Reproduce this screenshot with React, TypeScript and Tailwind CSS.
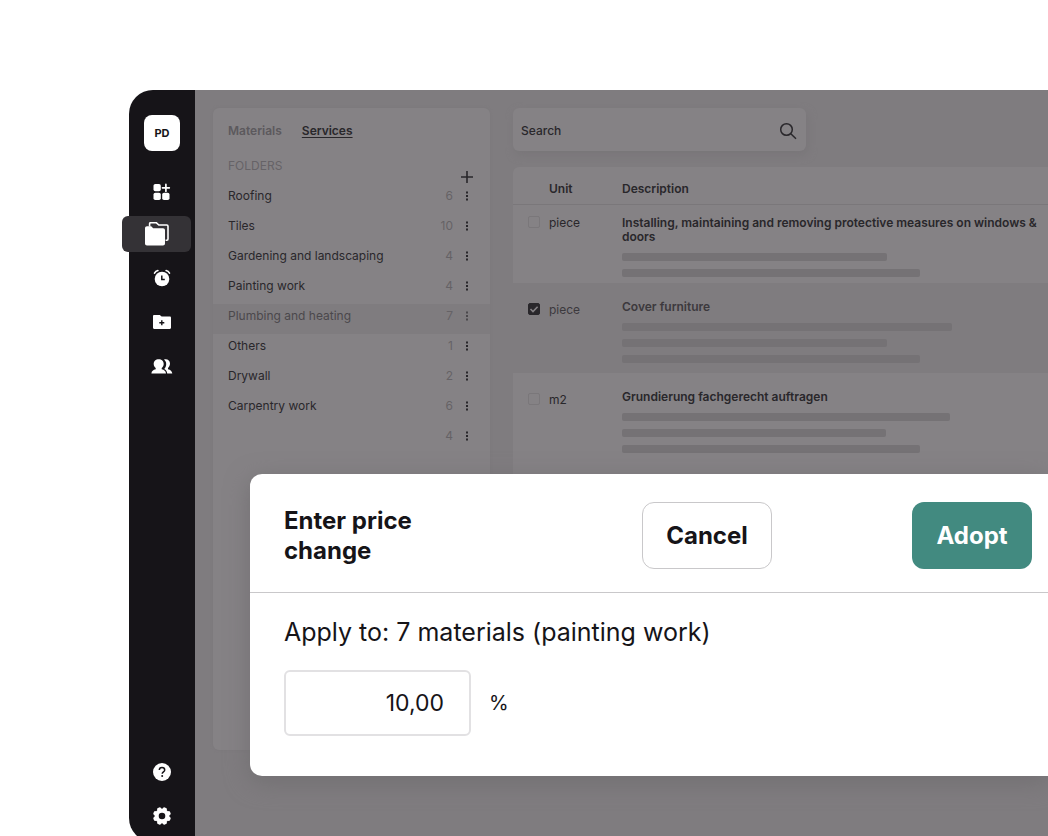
import type { ReactNode } from "react";

const folders = [
  { name: "Roofing", count: 6 },
  { name: "Tiles", count: 10 },
  { name: "Gardening and landscaping", count: 4 },
  { name: "Painting work", count: 4 },
  { name: "Plumbing and heating", count: 7, active: true },
  { name: "Others", count: 1 },
  { name: "Drywall", count: 2 },
  { name: "Carpentry work", count: 6 },
  { name: "", count: 4 },
];

const services = [
  {
    unit: "piece",
    title: "Installing, maintaining and removing protective measures on windows & doors",
    bars: ["w-[265px]", "w-[298px]"],
    row: "h-[79px]",
    unitPad: "pt-[11px]",
    titlePad: "pt-[11px]",
  },
  {
    unit: "piece",
    title: "Cover furniture",
    bars: ["w-[330px]", "w-[265px]", "w-[298px]"],
    row: "h-[90px] bg-[#7f7c7f] text-[#3c393d]",
    unitPad: "pt-5",
    titlePad: "pt-[17px]",
    checked: true,
  },
  {
    unit: "m2",
    title: "Grundierung fachgerecht auftragen",
    bars: ["w-[328px]", "w-[264px]", "w-[298px]"],
    row: "h-[110px]",
    unitPad: "pt-5",
    titlePad: "pt-[17px]",
  },
];

function GridIcon() {
  return (
    <svg width="20" height="20" viewBox="0 0 20 20" fill="currentColor">
      <rect x="1.5" y="4" width="7.3" height="7.3" rx="1.8" />
      <rect x="1.5" y="12.7" width="7.3" height="7.3" rx="1.8" />
      <rect x="10.2" y="12.7" width="7.3" height="7.3" rx="1.8" />
      <path d="M13.9 4.4v6.8M10.5 7.8h6.8" stroke="currentColor" strokeWidth="1.7" strokeLinecap="round" />
    </svg>
  );
}

function FoldersIcon() {
  return (
    <svg width="24" height="24" viewBox="0 0 24 24" fill="none">
      <path
        d="M0 6.3C0 5.100.8 4.300 2 4.300h4.200l2 2h9.800c1.200 0 2 .8 2 2V21.500c0 1.200-.8 2-2 2H2c-1.200 0-2-.8-2-2z"
        fill="currentColor"
      />
      <path
        d="M4.600 4.400V1.800c0-.8.400-1.200 1.200-1.200h5.400l2.600 2.400h8c.8 0 1.200.4 1.200 1.200v12.800c0 .8-.4 1.200-1.200 1.200h-1.200"
        stroke="currentColor"
        strokeWidth="1.600"
        strokeLinejoin="round"
      />
    </svg>
  );
}

function AlarmIcon() {
  return (
    <svg width="18" height="18" viewBox="0 0 18 18" fill="none">
      <circle cx="9" cy="10" r="7.300" fill="currentColor" />
      <path d="M1.500 4.200C2.200 2.900 3.400 1.900 4.900 1.500M16.500 4.200c-.7-1.300-1.900-2.300-3.400-2.700" stroke="currentColor" strokeWidth="1.600" strokeLinecap="round" />
      <path d="M8.800 6.600v3.800h3" stroke="#161418" strokeWidth="1.500" />
    </svg>
  );
}

function FolderPlusIcon() {
  return (
    <svg width="18" height="14" viewBox="0 0 18 14">
      <path d="M0 1.200C0 .5.5 0 1.200 0h5.600l1.800 1.600h8.200c.7 0 1.200.5 1.200 1.200v10c0 .7-.5 1.200-1.200 1.200H1.200C.5 14 0 13.500 0 12.800z" fill="currentColor" />
      <path d="M8.800 5.300v5M6.300 7.800h5" stroke="#161418" strokeWidth="1.400" />
    </svg>
  );
}

function UsersIcon() {
  return (
    <svg width="22" height="15" viewBox="0 0 22 15" fill="currentColor">
      <path d="M13 .6c3.200-1 6 .9 6 4 0 1.900-.8 3.300-2 4.300v1.300c2.500.7 4 1.700 4.300 4.300h-5.100c-.2-2.200-1.200-3.600-3-4.500 1.300-1.500 2-3.200 2-5.100 0-1.700-.8-3.200-2.200-4.300z" />
      <path d="M7.700.3c3 0 5 2 5 4.700 0 1.700-.8 3.200-2 4.100v1.200c2.500.6 4.100 1.700 4.300 4.200H.4c.2-2.500 1.800-3.600 4.300-4.200V9.100c-1.200-.9-2-2.400-2-4.100 0-2.700 2-4.700 5-4.700z" />
    </svg>
  );
}

function HelpIcon() {
  return (
    <svg width="18" height="18" viewBox="0 0 18 18" fill="none">
      <circle cx="9" cy="9" r="9" fill="currentColor" />
      <path d="M6.300 7.100c0-1.500 1.100-2.600 2.700-2.600s2.700 1 2.700 2.400c0 1.900-2.500 2-2.500 3.900" stroke="#161418" strokeWidth="1.500" />
      <circle cx="9.200" cy="13.100" r="1" fill="#161418" />
    </svg>
  );
}

function GearIcon() {
  return (
    <svg width="18" height="18" viewBox="0 0 18 18" fill="currentColor">
      <circle cx="9" cy="9" r="5.400" fill="none" stroke="currentColor" strokeWidth="4.200" />
      {[22.5, 67.5, 112.5, 157.5, 202.5, 247.5, 292.5, 337.5].map((angle) => (
        <rect key={angle} x="6.900" y="0" width="4.200" height="4" rx="1.500" transform={`rotate(${angle} 9 9)`} />
      ))}
    </svg>
  );
}

function NavButton({ label, children }: { label: string; children: ReactNode }) {
  return (
    <button type="button" aria-label={label} className="flex h-9 w-full items-center justify-center text-white">
      {children}
    </button>
  );
}

function Sidebar() {
  return (
    <nav className="flex w-[66px] shrink-0 flex-col rounded-l-3xl bg-[#161418] pt-[25px] pb-2">
      <div className="mx-auto flex h-9 w-9 items-center justify-center rounded-lg bg-white text-[11px] font-bold text-[#161418]">
        PD
      </div>
      <div className="mt-[21px] flex flex-col gap-2">
        <NavButton label="Dashboard">
          <GridIcon />
        </NavButton>
        <button
          type="button"
          aria-label="Folders"
          className="-ml-[7px] mr-1 flex h-9 items-center rounded-md bg-[#343236] pl-[23px] text-white"
        >
          <FoldersIcon />
        </button>
        <NavButton label="Reminders">
          <AlarmIcon />
        </NavButton>
        <NavButton label="Add folder">
          <FolderPlusIcon />
        </NavButton>
        <NavButton label="Contacts">
          <UsersIcon />
        </NavButton>
      </div>
      <div className="mt-auto flex flex-col gap-2">
        <NavButton label="Help">
          <HelpIcon />
        </NavButton>
        <NavButton label="Settings">
          <GearIcon />
        </NavButton>
      </div>
    </nav>
  );
}

function FolderPanel() {
  return (
    <section className="flex w-[277px] shrink-0 flex-col self-stretch rounded-md bg-[#858285] shadow-[0_0_3px_#7b787b]">
      <div className="flex gap-5 px-[15px] pt-[15px] text-xs font-semibold leading-4">
        <a href="#materials" className="text-[#5c595d]">
          Materials
        </a>
        <a href="#services" className="underline underline-offset-2">
          Services
        </a>
      </div>
      <div className="mt-[19px] flex h-[26px] justify-between pl-[15px] pr-4">
        <h2 className="text-xs leading-4 text-[#666367]">FOLDERS</h2>
        <button type="button" aria-label="New folder" className="self-end">
          <svg width="14" height="14" viewBox="0 0 14 14" stroke="currentColor" strokeWidth="1.600">
            <path d="M7 1v12M1 7h12" />
          </svg>
        </button>
      </div>
      <ul>
        {folders.map((folder, i) => (
          <li
            key={i}
            className={`flex h-[30px] items-center pb-1.5 pl-[15px] pr-[21px] text-xs ${
              folder.active ? "bg-[#7f7c7f] text-[#4b484c]" : ""
            }`}
          >
            <span className="flex-1">{folder.name}</span>
            <span className="mr-3 text-[#656266]">{folder.count}</span>
            <button type="button" aria-label="Folder menu">
              <svg width="4" height="10" viewBox="0 0 4 10" fill="currentColor">
                <path d="M1 .5h2v2H1zM1 4h2v2H1zM1 7.500h2v2H1z" />
              </svg>
            </button>
          </li>
        ))}
      </ul>
    </section>
  );
}

function SearchBox() {
  return (
    <label className="flex h-[43px] w-[293px] items-center rounded-md bg-[#858285] pl-2 pr-[9px] pt-0.5 shadow-[2px_4px_8px_#797679]">
      <input
        type="text"
        aria-label="Search"
        placeholder="Search"
        className="min-w-0 flex-1 text-xs font-medium outline-none placeholder:text-[#29272b]"
      />
      <svg width="18" height="18" viewBox="0 0 18 18" fill="none" stroke="currentColor" strokeWidth="1.500">
        <circle cx="7.500" cy="7.500" r="5.800" />
        <path d="m11.800 11.800 5.200 5" />
      </svg>
    </label>
  );
}

function ServiceTable() {
  return (
    <div className="mt-4 flex-1 rounded-tl-md bg-[#858285]">
      <table className="w-full table-fixed border-collapse text-left text-xs leading-[14px]">
        <thead>
          <tr className="h-[37px] border-b border-[#7a777a] align-top">
            <th className="w-9" />
            <th className="w-[73px] pt-[15px] font-semibold">Unit</th>
            <th className="pt-[15px] font-semibold">Description</th>
          </tr>
        </thead>
        <tbody>
          {services.map((service) => (
            <tr key={service.title} className={`align-top ${service.row}`}>
              <td className={`pl-[15px] ${service.unitPad}`}>
                <span className="relative block h-3 w-3">
                  <input
                    type="checkbox"
                    aria-label={service.title}
                    defaultChecked={service.checked}
                    className="block h-3 w-3 appearance-none rounded-xs border border-[#7a777a] checked:border-[#29272b] checked:bg-[#29272b]"
                  />
                  {service.checked && (
                    <svg
                      className="pointer-events-none absolute inset-0"
                      width="12"
                      height="12"
                      viewBox="0 0 12 12"
                      fill="none"
                      stroke="#858285"
                      strokeWidth="1.600"
                    >
                      <path d="m2.500 6 2.500 2.500 4.600-4.700" />
                    </svg>
                  )}
                </span>
              </td>
              <td className={service.unitPad}>{service.unit}</td>
              <td className={`pr-1 ${service.titlePad}`}>
                <h3 className="font-semibold">{service.title}</h3>
                <div className="mt-[9px] flex flex-col gap-2">
                  {service.bars.map((width, i) => (
                    <div key={i} className={`h-2 rounded-xs bg-[#757275] ${width}`} />
                  ))}
                </div>
              </td>
            </tr>
          ))}
        </tbody>
      </table>
    </div>
  );
}

function PriceDialog() {
  return (
    <div
      role="dialog"
      aria-labelledby="price-title"
      className="absolute left-[121px] right-0 top-[384px] rounded-l-xl bg-white text-2xl text-[#161418] shadow-[0_6px_24px_#726f72]"
    >
      <header className="flex items-center justify-between border-b border-[#c9c8ca] pb-[23px] pl-[34px] pr-4 pt-7">
        <h1 id="price-title" className="w-[218px] font-bold leading-[30px]">
          Enter price change
        </h1>
        <button type="button" className="h-[67px] w-[130px] rounded-xl border border-[#c9c8ca] font-bold">
          Cancel
        </button>
        <button type="button" className="h-[67px] w-[120px] rounded-xl bg-[#428a80] font-bold text-white">
          Adopt
        </button>
      </header>
      <div className="px-[34px] pb-10 pt-6">
        <label htmlFor="percent" className="block text-[25px] leading-[30px]">
          Apply to: 7 materials (painting work)
        </label>
        <div className="mt-[23px] flex items-center gap-[18px]">
          <input
            id="percent"
            type="text"
            defaultValue="10,00"
            className="h-[66px] w-[187px] rounded-md border-2 border-[#e2e1e3] pr-[25px] text-right text-[23px] outline-none"
          />
          <span className="text-xl">%</span>
        </div>
      </div>
    </div>
  );
}

export default function App() {
  return (
    <main className="h-screen overflow-hidden bg-white pl-[129px] pt-[90px] font-['Inter',sans-serif] text-[#29272b]">
      <div className="relative flex h-[calc(100vh-84px)]">
        <Sidebar />
        <div className="flex min-w-0 flex-1 gap-[23px] bg-[#7f7c7f] pb-[92px] pl-[18px] pt-[18px]">
          <FolderPanel />
          <div className="flex min-w-0 flex-1 flex-col">
            <SearchBox />
            <ServiceTable />
          </div>
        </div>
        <PriceDialog />
      </div>
    </main>
  );
}
